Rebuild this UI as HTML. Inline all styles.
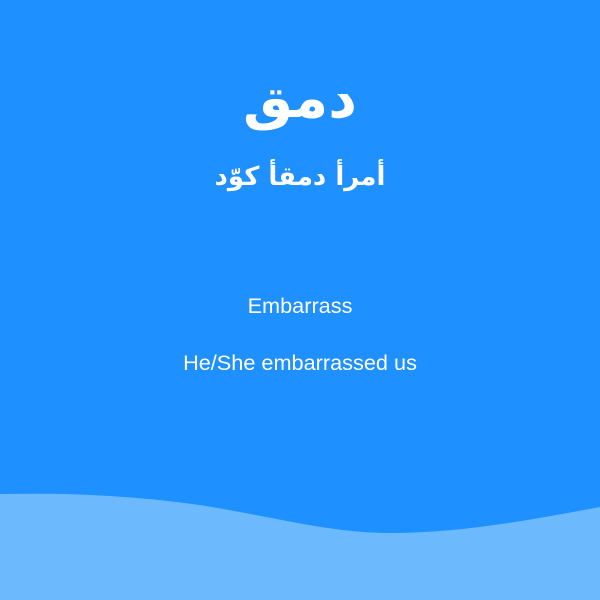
<!DOCTYPE html>
<html><head><meta charset="utf-8"><style>
html,body{margin:0;padding:0}
body{width:600px;height:600px;background:#1E90FF;position:relative;overflow:hidden;color:#fff;font-family:"Liberation Sans","Noto Sans CJK SC",sans-serif}
.t{position:absolute;left:0;width:600px;text-align:center;white-space:nowrap}
.a1{top:66px;font-size:56px;font-weight:bold;font-family:"DejaVu Sans","Noto Sans CJK SC",sans-serif}
.a2{top:162px;font-size:26px;font-weight:bold;font-family:"DejaVu Sans","Noto Sans CJK SC",sans-serif}
.e1{top:293px;font-size:21.7px}
.e2{top:350px;font-size:21.7px}
svg{position:absolute;left:0;top:0}
</style></head><body>
<svg width="600" height="600"><path d="M0 494 C60 493 120 494 200 505 C280 518 330 533 390 533 C460 533 530 520 600 507 L600 600 L0 600 Z" fill="#6CB9FE"/></svg>
<div class="t a1" dir="rtl">دمق</div>
<div class="t a2" dir="rtl">أمرأ دمقأ كوّد</div>
<div class="t e1">Embarrass</div>
<div class="t e2">He/She embarrassed us</div>
</body></html>
